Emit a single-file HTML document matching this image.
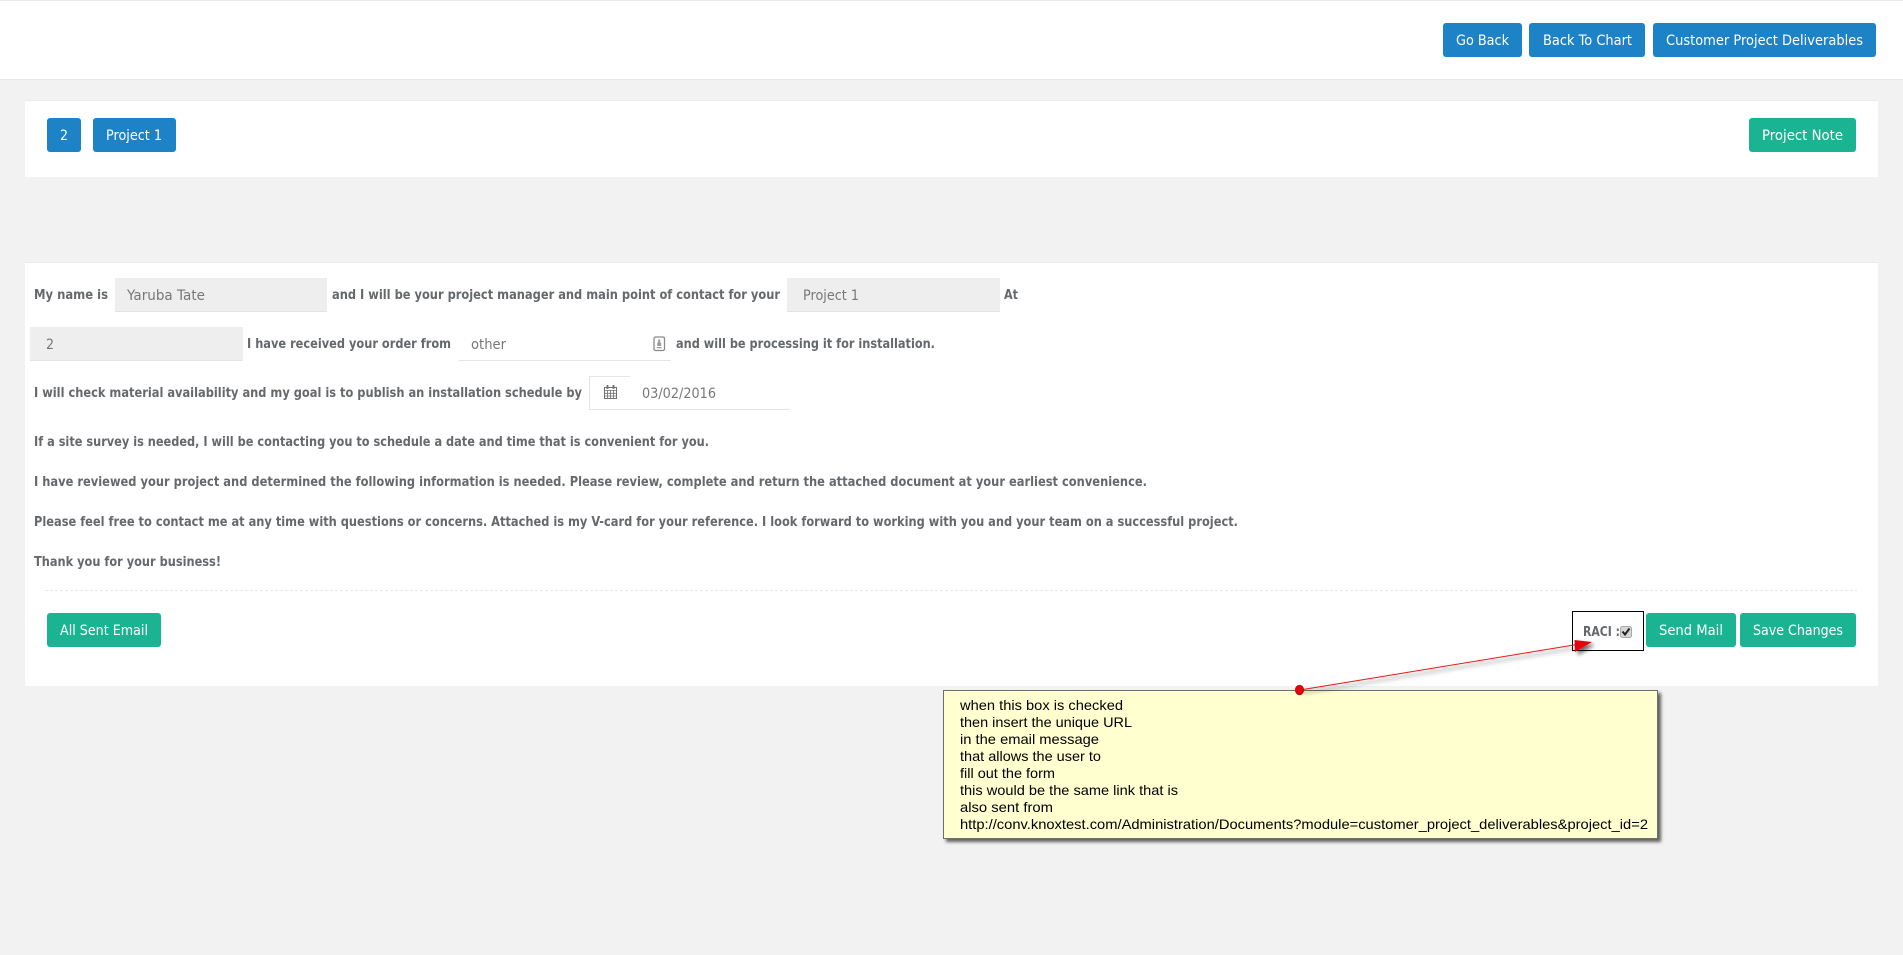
<!DOCTYPE html>
<html lang="en">
<head>
<meta charset="utf-8">
<title>Project Email</title>
<style>
html,body{margin:0;padding:0;background:#f2f2f2;width:1903px;height:955px;overflow:hidden}
svg{display:block;position:absolute;left:0;top:0}
text{font-family:"DejaVu Sans","Liberation Sans",sans-serif;font-size:13px}
.b{font-weight:bold;fill:#66696c;font-size:13px}
.w{fill:#fff;font-size:14px}
.i{fill:#777;font-size:14px}
.n{font-family:"Liberation Sans",Arial,sans-serif;font-size:14px;fill:#000}
</style>
</head>
<body>
<svg width="1903" height="955" viewBox="0 0 1903 955" xmlns="http://www.w3.org/2000/svg">
<defs>
<filter id="s" x="-10%" y="-10%" width="120%" height="130%"><feDropShadow dx="3" dy="3" stdDeviation="1.5" flood-color="#000" flood-opacity=".6"/></filter>
<filter id="s2" x="-30%" y="-50%" width="160%" height="200%"><feDropShadow dx="3" dy="3" stdDeviation="2" flood-color="#000" flood-opacity=".6"/></filter>
</defs>
<rect width="1903" height="955" fill="#f2f2f2"/>
<!-- header -->
<rect x="0" y="0" width="1903" height="80" fill="#fff"/>
<rect x="0" y="0" width="1903" height="1" fill="#e7ecf1"/>
<rect x="0" y="79" width="1903" height="1" fill="#e7e7e7"/>
<rect x="1443" y="23" width="79" height="34" rx="3" fill="#1e82c7"/>
<rect x="1529" y="23" width="116" height="34" rx="3" fill="#1e82c7"/>
<rect x="1653" y="23" width="223" height="34" rx="3" fill="#1e82c7"/>
<text class="w" x="1456" y="45" textLength="53" lengthAdjust="spacingAndGlyphs">Go Back</text>
<text class="w" x="1543" y="45" textLength="89" lengthAdjust="spacingAndGlyphs">Back To Chart</text>
<text class="w" x="1666" y="45" textLength="197" lengthAdjust="spacingAndGlyphs">Customer Project Deliverables</text>
<!-- panel 1 -->
<rect x="25" y="100" width="1853" height="77" fill="#fff"/>
<rect x="25" y="100" width="1853" height="1" fill="#e9edf1"/>
<rect x="47" y="118" width="34" height="34" rx="3" fill="#1e82c7"/>
<rect x="93" y="118" width="83" height="34" rx="3" fill="#1e82c7"/>
<rect x="1749" y="118" width="107" height="34" rx="3" fill="#1bb492"/>
<text class="w" x="60" y="140" textLength="8" lengthAdjust="spacingAndGlyphs">2</text>
<text class="w" x="106" y="140" textLength="56" lengthAdjust="spacingAndGlyphs">Project 1</text>
<text class="w" x="1762" y="140" textLength="81" lengthAdjust="spacingAndGlyphs">Project Note</text>
<!-- panel 2 -->
<rect x="25" y="262" width="1853" height="424" fill="#fff"/>
<rect x="25" y="262" width="1853" height="1" fill="#eaeaea"/>
<!-- row 1 -->
<text class="b" x="34" y="299" textLength="74" lengthAdjust="spacingAndGlyphs">My name is</text>
<rect x="115" y="278" width="212" height="34" fill="#eee"/><rect x="115" y="311" width="212" height="1" fill="#e3e3e3"/>
<text class="i" x="127" y="300" textLength="78" lengthAdjust="spacingAndGlyphs">Yaruba Tate</text>
<text class="b" x="332" y="299" textLength="448" lengthAdjust="spacingAndGlyphs">and I will be your project manager and main point of contact for your</text>
<rect x="787" y="278" width="213" height="34" fill="#eee"/><rect x="787" y="311" width="213" height="1" fill="#e3e3e3"/>
<text class="i" x="803" y="300" textLength="56" lengthAdjust="spacingAndGlyphs">Project 1</text>
<text class="b" x="1004" y="299" textLength="14" lengthAdjust="spacingAndGlyphs">At</text>
<!-- row 2 -->
<rect x="30" y="327" width="213" height="34" fill="#eee"/><rect x="30" y="360" width="213" height="1" fill="#e3e3e3"/>
<text class="i" x="46" y="349" textLength="8" lengthAdjust="spacingAndGlyphs">2</text>
<text class="b" x="247" y="348" textLength="204" lengthAdjust="spacingAndGlyphs">I have received your order from</text>
<rect x="459" y="360" width="212" height="1" fill="#e5e5e5"/>
<text class="i" x="471" y="349" textLength="35" lengthAdjust="spacingAndGlyphs">other</text>
<rect x="654" y="337" width="10.5" height="13.5" rx="1.5" fill="none" stroke="#8a8a8a" stroke-width="1.3"/>
<path d="M658.2 339.5h2v2.5l1 1.5v2.5h-4v-2.5l1-1.5zM656.8 347h4.8v1.3h-4.8z" fill="#9a9a9a"/>
<text class="b" x="676" y="348" textLength="259" lengthAdjust="spacingAndGlyphs">and will be processing it for installation.</text>
<!-- row 3 -->
<text class="b" x="34" y="397" textLength="548" lengthAdjust="spacingAndGlyphs">I will check material availability and my goal is to publish an installation schedule by</text>
<path d="M630 376.5H589.5V409.5H790" fill="none" stroke="#e5e5e5" stroke-width="1"/>
<g fill="none" stroke="#6f6f6f">
<rect x="604.5" y="387.5" width="12" height="11" fill="#fff" stroke-width="1"/>
<path d="M604.5 390.5h12M604.5 393.3h12M604.5 396h12M607.5 390v8M610.5 390v8M613.5 390v8" stroke-width=".8"/>
<path d="M607.5 385v4M613.5 385v4" stroke-width="1.8"/>
</g>
<text class="i" x="642" y="398" textLength="74" lengthAdjust="spacingAndGlyphs">03/02/2016</text>
<!-- paragraphs -->
<text class="b" x="34" y="446" textLength="675" lengthAdjust="spacingAndGlyphs">If a site survey is needed, I will be contacting you to schedule a date and time that is convenient for you.</text>
<text class="b" x="34" y="486" textLength="1113" lengthAdjust="spacingAndGlyphs">I have reviewed your project and determined the following information is needed. Please review, complete and return the attached document at your earliest convenience.</text>
<text class="b" x="34" y="526" textLength="1204" lengthAdjust="spacingAndGlyphs">Please feel free to contact me at any time with questions or concerns. Attached is my V-card for your reference. I look forward to working with you and your team on a successful project.</text>
<text class="b" x="34" y="566" textLength="187" lengthAdjust="spacingAndGlyphs">Thank you for your business!</text>
<line x1="45" y1="590.5" x2="1857" y2="590.5" stroke="#e7e7e7" stroke-dasharray="3 2"/>
<!-- footer buttons -->
<rect x="47" y="613" width="114" height="34" rx="3" fill="#1bb492"/>
<text class="w" x="60" y="635" textLength="88" lengthAdjust="spacingAndGlyphs">All Sent Email</text>
<rect x="1572.5" y="611.5" width="71" height="39" fill="#fff" stroke="#000" stroke-width="1"/>
<text class="b" x="1583" y="636" textLength="37" lengthAdjust="spacingAndGlyphs">RACI :</text>
<rect x="1620.5" y="626.5" width="11" height="11" rx="2" fill="#d6d6d6" stroke="#a8a8a8"/>
<path d="M1622.5 631.5l2.5 3 4.5-6" fill="none" stroke="#222" stroke-width="2"/>
<rect x="1646" y="613" width="90" height="34" rx="3" fill="#1bb492"/>
<text class="w" x="1659" y="635" textLength="64" lengthAdjust="spacingAndGlyphs">Send Mail</text>
<rect x="1740" y="613" width="116" height="34" rx="3" fill="#1bb492"/>
<text class="w" x="1753" y="635" textLength="90" lengthAdjust="spacingAndGlyphs">Save Changes</text>
<!-- annotation -->
<rect x="943.5" y="690.5" width="714" height="148" fill="#ffffd0" stroke="#6e6e6e" filter="url(#s)"/>
<g>
<text class="n" x="960" y="710" textLength="163" lengthAdjust="spacingAndGlyphs">when this box is checked</text>
<text class="n" x="960" y="727" textLength="172" lengthAdjust="spacingAndGlyphs">then insert the unique URL</text>
<text class="n" x="960" y="744" textLength="139" lengthAdjust="spacingAndGlyphs">in the email message</text>
<text class="n" x="960" y="761" textLength="141" lengthAdjust="spacingAndGlyphs">that allows the user to</text>
<text class="n" x="960" y="778" textLength="95" lengthAdjust="spacingAndGlyphs">fill out the form</text>
<text class="n" x="960" y="795" textLength="218" lengthAdjust="spacingAndGlyphs">this would be the same link that is</text>
<text class="n" x="960" y="812" textLength="93" lengthAdjust="spacingAndGlyphs">also sent from</text>
<text class="n" x="960" y="829" textLength="688" lengthAdjust="spacingAndGlyphs">http://conv.knoxtest.com/Administration/Documents?module=customer_project_deliverables&amp;project_id=2</text>
</g>
<g filter="url(#s2)">
<line x1="1300" y1="690" x2="1580" y2="644" stroke="#f01818" stroke-width="1"/>
<path d="M1574.5 640L1592 642L1575 652Z" fill="#e8000a"/>
</g>
<ellipse cx="1299.5" cy="690" rx="4.2" ry="4.8" fill="#e8000a" stroke="#a01010" stroke-width=".7"/>
</svg>
</body>
</html>
